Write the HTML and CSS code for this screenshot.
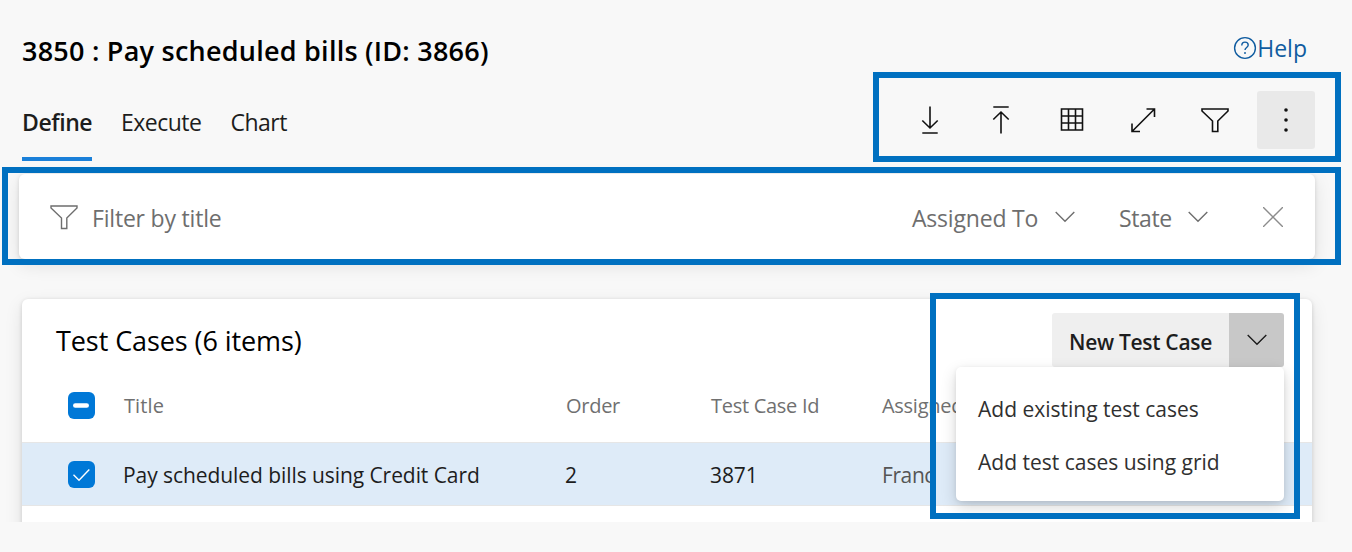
FILE: index.html
```
<!DOCTYPE html>
<html lang="en">
<head>
<meta charset="utf-8">
<title>Test plan</title>
<link rel="stylesheet" href="styles.css">
</head>
<body>
<main class="page">
  <header class="header">
    <div class="heading">
      <h1 class="title">3850 : Pay scheduled bills (ID: 3866)</h1>
      <nav class="tabs">
        <a class="tab tab-active">Define</a>
        <a class="tab">Execute</a>
        <a class="tab">Chart</a>
      </nav>
    </div>
    <div class="actions">
      <a class="help">
        <svg width="24" height="24" viewBox="0 0 24 24"><circle cx="12" cy="12" r="10.4"/><path d="M8.800 9.400c0-2 1.400-3.300 3.200-3.300s3.200 1.200 3.200 2.900c0 2.400-3.200 2.600-3.200 5.100"/><path d="M12 16v2"/></svg>
        <span>Help</span>
      </a>
      <div class="toolbar">
        <span class="tool"><svg width="30" height="30" viewBox="0 0 30 30"><path d="M15 1.500V23M7.300 15.500 15 23l7.700-7.500M7.300 28h15.400"/></svg></span>
        <span class="tool"><svg width="30" height="30" viewBox="0 0 30 30"><path d="M15 28.500V7M7.300 14.500 15 7l7.700 7.500M7.300 2h15.400"/></svg></span>
        <span class="tool"><svg width="30" height="30" viewBox="0 0 30 30"><path d="M4.500 4H25.500v21H4.500zM11.500 4v21M18.500 4v21M4.500 11H25.500M4.500 18H25.500"/></svg></span>
        <span class="tool"><svg width="30" height="30" viewBox="0 0 30 30"><path d="M4 26.500 26.500 4M18.500 4h8v8M4 18.500v8h8"/></svg></span>
        <span class="tool"><svg width="30" height="30" viewBox="0 0 30 30"><path d="M2 4h26v2L17.800 16v10.500h-5.300V16L2 6z"/></svg></span>
        <span class="tool tool-more"><svg width="30" height="30" viewBox="0 0 30 30"><circle cx="15" cy="5" r="1.800"/><circle cx="15" cy="15" r="1.800"/><circle cx="15" cy="25" r="1.800"/></svg></span>
      </div>
    </div>
  </header>

  <section class="filter">
    <svg class="funnel" width="30" height="30" viewBox="0 0 30 30"><path d="M2 4h26v2L17.800 16v10.500h-5.300V16L2 6z"/></svg>
    <span class="filter-text">Filter by title</span>
    <span class="assigned">Assigned To</span>
    <svg class="chevron" width="20" height="12" viewBox="0 0 20 12"><path d="M.7 1 10 10.300 19.300 1"/></svg>
    <span class="state">State</span>
    <svg class="chevron" width="20" height="12" viewBox="0 0 20 12"><path d="M.7 1 10 10.300 19.300 1"/></svg>
    <svg class="close" width="20" height="20" viewBox="0 0 20 20"><path d="M0 0 20 20M20 0 0 20"/></svg>
  </section>

  <div class="list-area">
    <section class="card">
      <div class="card-head">
        <h2 class="card-title">Test Cases (6 items)</h2>
        <div class="split">
          <span class="split-main">New Test Case</span>
          <span class="split-arrow"><svg width="20" height="12" viewBox="0 0 20 12"><path d="M.7 1 10 10.300 19.300 1"/></svg></span>
        </div>
      </div>
      <div class="row row-head">
        <span class="check"><svg width="27" height="27" viewBox="0 0 27 27"><path class="dash" d="M7.300 13.500h11.400"/></svg></span>
        <span class="col-title">Title</span>
        <span>Order</span>
        <span>Test Case Id</span>
        <span>Assigned</span>
      </div>
      <div class="row row-item">
        <span class="check"><svg width="27" height="27" viewBox="0 0 27 27"><path d="M5.500 13.700 11 19.200 21.300 8.400"/></svg></span>
        <span>Pay scheduled bills using Credit Card</span>
        <span>2</span>
        <span>3871</span>
        <span class="person">Franc</span>
      </div>
    </section>
  </div>
</main>

<div class="menu">
  <span class="menu-item">Add existing test cases</span>
  <span class="menu-item">Add test cases using grid</span>
</div>
<div class="mark mark-toolbar"></div>
<div class="mark mark-filter"></div>
<div class="mark mark-menu"></div>
</body>
</html>
```
FILE: styles.css
```
* { box-sizing: border-box; }
body {
  margin: 0;
  background: #f8f8f8;
  color: #1d1d1d;
  font-family: "Open Sans", "Noto Sans", sans-serif;
  font-size: 22px;
  overflow: hidden;
}
svg { display: block; fill: none; stroke: currentColor; stroke-width: 1.4; }
.page { width: 1352px; height: 552px; }

.header { display: flex; justify-content: space-between; height: 174px; padding: 0 37px 0 22px; }
.title { margin: 31px 0 0; color: #000; font-size: 27px; line-height: 40px; font-weight: 600; letter-spacing: .24px; white-space: nowrap; }
.tabs { display: flex; gap: 29px; margin-top: 31px; }
.tab { height: 59px; line-height: 40px; font-size: 23px; letter-spacing: -.5px; }
.tab-active { width: 70px; font-weight: 600; letter-spacing: -.42px; border-bottom: 4px solid #1a80d9; }

.actions { display: flex; flex-direction: column; align-items: flex-end; }
.help { display: flex; align-items: center; height: 40px; margin: 28px 8px 0 0; color: #105ca0; font-size: 23px; }
.toolbar { display: flex; gap: 13.3px; margin-top: 23px; color: #111; }
.tool { display: flex; align-items: center; justify-content: center; width: 58px; height: 58px; }
.tool svg { stroke-width: 1.6; }
.tool-more { background: #e9e9e9; border-radius: 3px; }
.tool-more svg { fill: #111; stroke: none; }

.filter {
  display: flex;
  align-items: center;
  width: 1296px;
  height: 85px;
  margin-left: 19px;
  padding-left: 30px;
  border-radius: 6px;
  background: #fff;
  box-shadow: 0 6px 18px rgba(0, 0, 0, .1), 0 1px 4px rgba(0, 0, 0, .12);
  color: #6e6e6e;
  font-size: 23px;
  letter-spacing: -.2px;
}
.filter span { padding-top: 2px; }
.filter-text { width: 820px; margin-left: 13px; }
.assigned { width: 143px; }
.state { width: 69px; margin-left: 44px; letter-spacing: -.4px; }
.close { margin-left: 55px; color: #8c8c8c; }

.list-area { height: 263px; padding: 40px 40px 0 22px; overflow: hidden; }
.card { height: 260px; border-radius: 6px; background: #fff; box-shadow: 0 6px 18px rgba(0, 0, 0, .1), 0 1px 4px rgba(0, 0, 0, .14); }
.card-head { display: flex; justify-content: space-between; height: 71px; padding: 14px 28px 0 34px; }
.card-title { margin: 0; color: #000; font-size: 27px; line-height: 55px; font-weight: 400; letter-spacing: -.08px; }
.split { display: flex; height: 54px; border-radius: 3px; overflow: hidden; font-size: 21px; font-weight: 600; line-height: 58px; letter-spacing: -.3px; }
.split-main { width: 177px; padding-left: 17px; background: #efefef; }
.split-arrow { display: flex; align-items: center; justify-content: center; width: 55px; background: #c8c8c8; }
.row { display: grid; grid-template-columns: 56px 442px 145px 171px 50px; align-items: center; padding-left: 46px; white-space: nowrap; }
.row-head { height: 72px; padding-bottom: 1px; color: #707070; font-size: 20px; font-weight: 500; letter-spacing: -.28px; }
.col-title { letter-spacing: .1px; }
.row-item { grid-template-columns: 55px 442px 145px 172px 50px; height: 64px; padding-top: 1px; border-top: 1px solid #e6e6e6; border-bottom: 1px solid #e6e6e6; background: #deebf8; font-size: 21px; letter-spacing: -.07px; }
.person { color: #555; letter-spacing: -.4px; }
.check { width: 27px; height: 27px; border-radius: 6px; background: #0078d7; color: #fff; }
.dash { stroke-width: 4.6; stroke-linecap: round; }

.menu {
  position: absolute;
  left: 956px;
  top: 367px;
  width: 328px;
  height: 134px;
  padding: 16px 22px;
  border-radius: 5px;
  background: #fff;
  box-shadow: 0 6px 16px rgba(0, 0, 0, .16), 0 1px 4px rgba(0, 0, 0, .08);
  color: #303030;
  font-size: 21px;
}
.menu-item { display: block; height: 53px; line-height: 53px; }

.mark { position: absolute; border: 6px solid #0070c0; }
.mark-toolbar { left: 873px; top: 72px; width: 468px; height: 90px; }
.mark-filter { left: 2px; top: 167px; width: 1339px; height: 98px; }
.mark-menu { left: 930px; top: 293px; width: 370px; height: 226px; }
```
